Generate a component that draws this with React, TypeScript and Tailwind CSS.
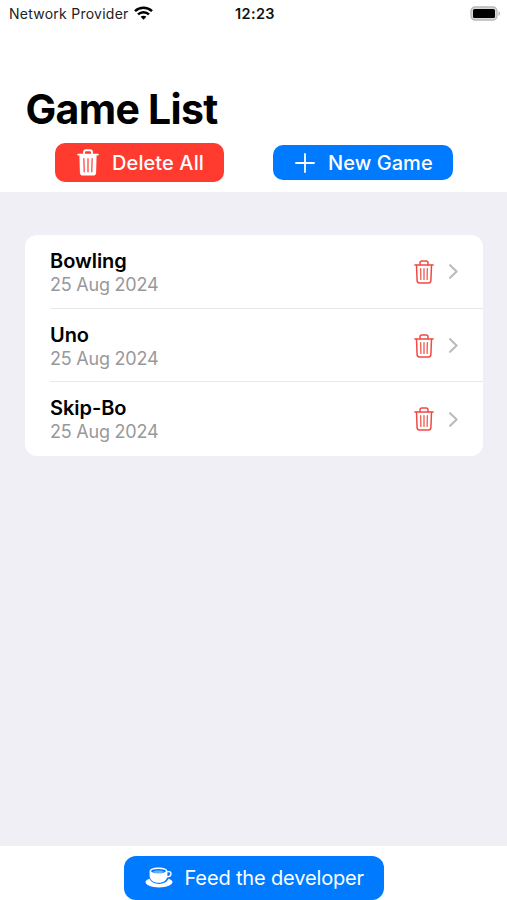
type IconProps = {
  className?: string;
};

type Game = {
  name: string;
  date: string;
};

const games: Game[] = [
  { name: "Bowling", date: "25 Aug 2024" },
  { name: "Uno", date: "25 Aug 2024" },
  { name: "Skip-Bo", date: "25 Aug 2024" },
];

function TrashIcon({ className }: IconProps) {
  return (
    <svg className={className} viewBox="0 0 20 24" fill="none" stroke="currentColor" strokeWidth="1.5" strokeLinecap="round" strokeLinejoin="round">
      <path d="M0.9 5H19.1" />
      <path d="M6 4.8V2.9C6 1.7 6.7 1 7.9 1H12.1C13.3 1 14 1.7 14 2.9V4.8" />
      <path d="M2.5 5.2L3.1 20.6C3.2 22.2 4 22.9 5.5 22.9H14.5C16 22.9 16.8 22.2 16.9 20.6L17.5 5.2" />
      <path d="M6.7 8.5L6.9 19.4M10 8.5V19.4M13.3 8.5L13.1 19.4" strokeWidth="1.2" />
    </svg>
  );
}

function TrashFillIcon({ className }: IconProps) {
  return (
    <svg className={className} viewBox="0 0 22 27" fill="none">
      <path d="M1.2 5.6H20.8M7 5.2V3.4C7 2 7.8 1.2 9.2 1.2H12.8C14.2 1.2 15 2 15 3.4V5.2" stroke="white" strokeWidth="1.9" strokeLinecap="round" />
      <path d="M2.4 6L2.9 23.8C3 25.7 3.9 26.6 5.9 26.6H16.1C18.1 26.6 19 25.7 19.1 23.8L19.6 6Z" fill="white" />
      <path d="M6.9 9.7L7.2 22.8M11 9.7V22.8M15.1 9.7L14.8 22.8" stroke="#ff3b30" strokeWidth="1.2" strokeLinecap="round" />
    </svg>
  );
}

function CupIcon({ className }: IconProps) {
  return (
    <svg className={className} viewBox="0 0 28 21" fill="none">
      {/* saucer */}
      <path d="M4.4 11.8C2 12.6 0.5 13.7 0.5 15C0.5 18 6.3 20.4 14 20.4C21.7 20.4 27.5 18 27.5 15C27.5 13.7 26 12.6 23.6 11.8C22.2 14.9 18.6 17 14 17C9.4 17 5.8 14.9 4.4 11.8Z" fill="white" />
      {/* cup */}
      <path d="M4.6 4.2C4.6 2.1 8.4 0.6 13.5 0.6C18.6 0.6 22.4 2.1 22.4 4.2V8.2C22.4 12.9 18.8 15.8 13.5 15.8C8.2 15.8 4.6 12.9 4.6 8.2Z" fill="white" />
      <ellipse cx="13.5" cy="4.1" rx="7.5" ry="2.2" fill="#007aff" />
      <path d="M7.8 4.9C9 4 11 3.5 13.5 3.5C16 3.5 18 4 19.2 4.9C18 5.7 16 6.1 13.5 6.1C11 6.1 9 5.7 7.8 4.9Z" fill="white" opacity="0.4" />
      {/* handle */}
      <path d="M22.2 4.9C24.7 4.2 26.2 5 26 6.9C25.8 8.9 23.8 9.9 21.4 9.8" stroke="white" strokeWidth="1.4" />
    </svg>
  );
}

function StatusBar() {
  return (
    <div className="flex h-7 items-center pl-[9px] pr-[6px]">
      <div className="flex flex-1 items-center gap-[5px]">
        <span className="text-[14px] leading-none tracking-[0.25px] whitespace-nowrap text-[#222]">Network Provider</span>
        <svg className="-mt-0.5 h-[14px] w-[19px]" viewBox="0 0 19 14" fill="none" stroke="black" strokeWidth="2.5">
          <path d="M1 5.2C5.8 0.7 13.2 0.7 18 5.2" />
          <path d="M4 8.4C7.1 5.5 11.9 5.5 15 8.4" />
          <path d="M9.5 13.7L6.6 10.8C8.2 9.4 10.8 9.4 12.4 10.8Z" fill="black" stroke="none" />
        </svg>
      </div>
      <span className="text-[14.5px] leading-none font-semibold tracking-[0.35px] text-[#111]">12:23</span>
      <div className="flex flex-1 justify-end">
        <svg className="-mt-0.5 h-[15px] w-[31px]" viewBox="0 0 31 15">
          <rect x="1" y="1" width="26" height="13" rx="4" fill="#d8d8d8" stroke="#b8b8b8" strokeWidth="1.3" />
          <rect x="3" y="3" width="22" height="9" rx="1.5" fill="black" />
          <path d="M28.5 5.2C30.6 6 30.6 9 28.5 9.8Z" fill="#b5b5b5" />
        </svg>
      </div>
    </div>
  );
}

function GameRow({ game, divided }: { game: Game; divided: boolean }) {
  return (
    <div className="relative flex h-[73.7px] items-center pl-[25px] pr-[25px]">
      <div className="flex-1 pt-[2px]">
        <div className="text-[20px] leading-[23px] font-semibold tracking-[-0.05px] text-black">{game.name}</div>
        <div className="text-[18px] leading-[23px] tracking-[-0.22px] text-[#98989b]">{game.date}</div>
      </div>
      <TrashIcon className="h-6 w-5 text-[#f04a42]" />
      <svg className="ml-[15px] h-[15px] w-[9px]" viewBox="0 0 9 15" fill="none" stroke="#bcbcc0" strokeWidth="2.2" strokeLinecap="round" strokeLinejoin="round">
        <path d="M1.1 1.2L7.6 7.5L1.1 13.8" />
      </svg>
      {divided && <div className="absolute right-0 bottom-0 left-[25px] h-px bg-[#e8e8ea]"></div>}
    </div>
  );
}

export default function App() {
  return (
    <div className="flex h-[900px] w-[507px] flex-col overflow-hidden bg-[#f0eff5] font-['Inter','Liberation_Sans',sans-serif]">
      <header className="h-48 bg-white">
        <StatusBar />
        <h1 className="mt-[56px] pl-[25.5px] text-[41px] leading-[51px] font-bold tracking-[-0.7px] text-black">Game List</h1>
        <div className="mt-[7.5px] flex h-10 items-center pl-[55px]">
          <button className="flex h-[39.5px] w-[169px] items-center rounded-[10px] bg-[#ff3b30] pl-[22px] text-white">
            <TrashFillIcon className="h-[27px] w-[22px]" />
            <span className="ml-[13px] text-[20px] font-medium tracking-[0.1px] whitespace-nowrap">Delete All</span>
          </button>
          <button className="ml-[48.5px] flex h-[35px] w-[180px] items-center rounded-[10px] bg-[#007aff] pl-[22px] text-white">
            <svg className="size-5" viewBox="0 0 20 20" stroke="white" strokeWidth="1.8" strokeLinecap="round">
              <path d="M10 1V19M1 10H19" />
            </svg>
            <span className="ml-[13.5px] text-[20px] font-medium tracking-[0.05px] whitespace-nowrap">New Game</span>
          </button>
        </div>
      </header>

      <main className="flex-1 pt-[43px] pr-6 pl-[25px]">
        <div className="rounded-xl bg-white">
          {games.map((game, i) => (
            <GameRow key={game.name} game={game} divided={i < games.length - 1} />
          ))}
        </div>
      </main>

      <footer className="flex h-[54px] items-end justify-center bg-white">
        <button className="flex h-[44.5px] w-[260px] items-center rounded-xl bg-[#007aff] pl-[21px] text-white">
          <CupIcon className="h-[21px] w-7" />
          <span className="ml-[12px] text-[20px] tracking-[-0.15px] whitespace-nowrap">Feed the developer</span>
        </button>
      </footer>
    </div>
  );
}
